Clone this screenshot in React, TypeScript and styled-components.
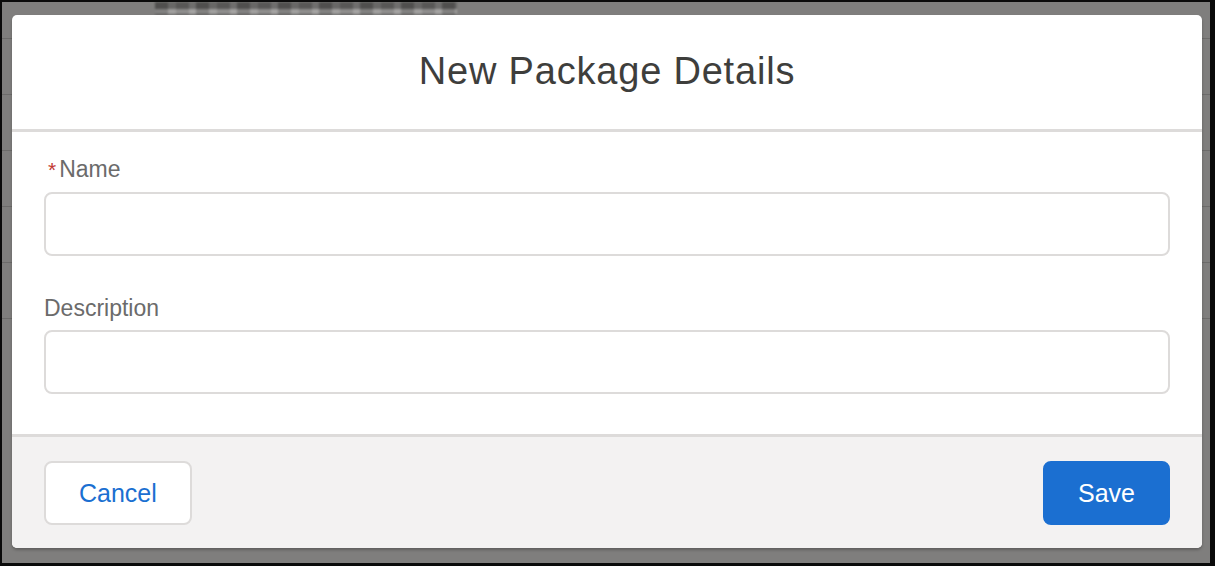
import React from "react";
import styled, { createGlobalStyle } from "styled-components";

const GlobalStyle = createGlobalStyle`
    html, body {
        margin: 0;
        padding: 0;
        background: #000000;
    }
    * {
        box-sizing: border-box;
    }
`

const Frame = styled.div`
    position: relative;
    width: 1215px;
    height: 566px;
    border-style: solid;
    border-color: #0a0a0a;
    border-width: 2px 5px 3px 2px;
    background-color: #7f7e7d;
    overflow: hidden;
    font-family: "Liberation Sans", Arial, sans-serif;
`

const BackRow = styled.div<{ first?: boolean }>`
    position: relative;
    height: ${props => props.first ? '37px' : '56px'};
    border-bottom: 1px solid #6c6b6a;
`

// pixelated, blurred text peeking out above the dialog
const BlurredText = styled.div`
    position: absolute;
    left: 153px;
    top: 0;
    width: 302px;
    height: 13px;
    background:
        repeating-linear-gradient(90deg, rgba(0,0,0,0.16) 0 13px, rgba(255,255,255,0.06) 13px 21px, rgba(0,0,0,0.08) 21px 34px, rgba(255,255,255,0.1) 34px 41px),
        linear-gradient(to bottom, #5f5e5d 0 7px, #9b9a99 7px 12px, #5a5a5a 12px 13px);
    filter: blur(1.2px);
`

const Overlay = styled.div`
    position: absolute;
    inset: 0;
    display: flex;
    padding: 13px 8px 15px 10px;
`

const Modal = styled.div`
    flex: 1;
    display: flex;
    flex-direction: column;
    border-radius: 5px;
    background: #ffffff;
    box-shadow: 0 2px 3px rgba(0, 0, 0, 0.25);
    overflow: hidden;
`

const Header = styled.header`
    height: 117px;
    display: flex;
    align-items: center;
    justify-content: center;
    border-bottom: 3px solid #dddbda;
`

const Title = styled.h2`
    margin: 0;
    font-size: 38px;
    font-weight: 400;
    letter-spacing: 0.8px;
    line-height: 1.2;
    color: #3e3e3c;
`

const Body = styled.div`
    display: flex;
    flex-direction: column;
    gap: 38px;
    padding: 23px 32px 40px;
`

const FormElement = styled.div`
    display: flex;
    flex-direction: column;
    gap: 8px;
`

const Label = styled.label`
    font-size: 23px;
    line-height: 28px;
    color: #6b6b6b;
`

const Required = styled.abbr`
    color: #c23934;
    text-decoration: none;
    margin: 0 3px 0 4px;
    font-size: 21px;
`

const Input = styled.input`
    height: 64px;
    width: 100%;
    border: 2px solid #dddbda;
    border-radius: 8px;
    background: #ffffff;
    outline: none;
    padding: 0 16px;
    font-size: 23px;
    font-family: inherit;
`

const Footer = styled.footer`
    flex: 1;
    display: flex;
    align-items: center;
    justify-content: space-between;
    padding: 1px 32px 0;
    border-top: 3px solid #dddbda;
    background: #f3f2f2;
`

const Button = styled.button<{ brand?: boolean }>`
    height: 64px;
    padding: 0 33px;
    border-radius: 8px;
    border: 2px solid ${props => props.brand ? '#1b6fd1' : '#dddbda'};
    background: ${props => props.brand ? '#1b6fd1' : '#ffffff'};
    color: ${props => props.brand ? '#ffffff' : '#1b6fd1'};
    font-family: inherit;
    font-size: 25px;
    cursor: pointer;
`

const App: React.FC = () => {
    return (
        <>
            <GlobalStyle />
            <Frame>
                <BackRow first>
                    <BlurredText />
                </BackRow>
                {[0, 1, 2, 3, 4].map(i => <BackRow key={i} />)}

                <Overlay>
                    <Modal role="dialog">
                        <Header>
                            <Title>New Package Details</Title>
                        </Header>
                        <Body>
                            <FormElement>
                                <Label><Required title="required">*</Required>Name</Label>
                                <Input />
                            </FormElement>
                            <FormElement>
                                <Label>Description</Label>
                                <Input />
                            </FormElement>
                        </Body>
                        <Footer>
                            <Button>Cancel</Button>
                            <Button brand>Save</Button>
                        </Footer>
                    </Modal>
                </Overlay>
            </Frame>
        </>
    );
};

export default App;
